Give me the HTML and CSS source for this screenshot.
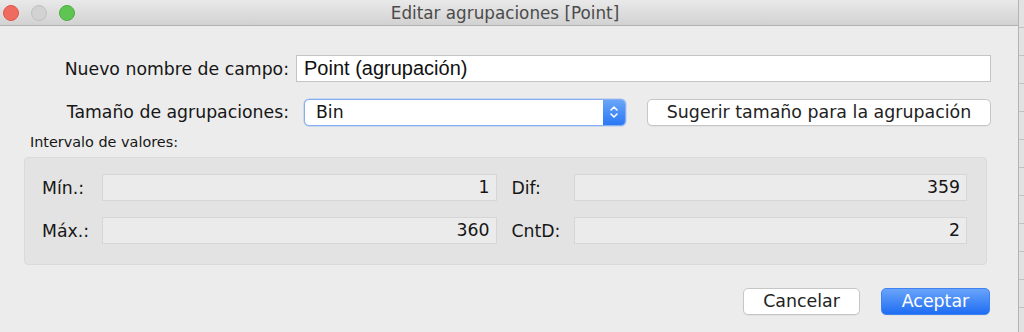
FILE: index.html
```html
<!DOCTYPE html>
<html>
<head>
	<meta http-equiv="Content-Type" content="text/html; charset=utf-8" />
	<title>Editar agrupaciones [Point]</title>
	<link rel="stylesheet" href="styles.css">
</head>
<body>
	<div class="window">
		<div class="titlebar">
			<div class="lights">
				<span class="light red"></span>
				<span class="light gray"></span>
				<span class="light green"></span>
			</div>
			<div class="title">Editar agrupaciones [Point]</div>
			<div></div>
		</div>

		<div class="content">
			<div class="row">
				<label class="lbl">Nuevo nombre de campo:</label>
				<div class="text-input">Point (agrupación)</div>
			</div>
			<div class="row row2">
				<label class="lbl">Tamaño de agrupaciones:</label>
				<div class="select">
					<span class="select-val">Bin</span>
					<span class="select-arrow">
						<svg width="10" height="16" viewBox="0 0 10 16"><path d="M2 6 L5 3 L8 6 M2 10 L5 13 L8 10" fill="none" stroke="#fff" stroke-width="1.5" stroke-linecap="round" stroke-linejoin="round"/></svg>
					</span>
				</div>
				<div class="btn btn-suggest">Sugerir tamaño para la agrupación</div>
			</div>

			<div class="section-title">Intervalo de valores:</div>
			<div class="group">
				<div class="g-row">
					<span class="g-lbl">Mín.:</span>
					<div class="g-field">1</div>
					<span class="g-lbl g-lbl2">Dif:</span>
					<div class="g-field g-field2">359</div>
				</div>
				<div class="g-row">
					<span class="g-lbl">Máx.:</span>
					<div class="g-field">360</div>
					<span class="g-lbl g-lbl2">CntD:</span>
					<div class="g-field g-field2">2</div>
				</div>
			</div>

			<div class="actions">
				<div class="btn btn-cancel">Cancelar</div>
				<div class="btn btn-ok">Aceptar</div>
			</div>
		</div>
	</div>
</body>
</html>
```

FILE: styles.css
```css
*{margin: 0;padding: 0;box-sizing: border-box;}
html,body{ height: 100%; }
body{ background: repeating-linear-gradient(180deg, #e2e2e2 0, #e2e2e2 27px, #c2c2c2 27px, #c2c2c2 28px); font-family: "DejaVu Sans", "Liberation Sans", sans-serif; color: #161616; overflow: hidden; }

.window{ width: 1019px; height: 332px; background: #ececec; border-right: 1px solid #b4b4b4; }

/* barra de titulo */
.titlebar{ display: grid; grid-template-columns: 1fr auto 1fr; align-items: center; height: 26px; background: linear-gradient(#e9e9e9, #d2d2d2); border-bottom: 1px solid #b3b3b3; padding-right: 8px; }
.lights{ display: flex; gap: 12px; padding-left: 3px; }
.light{ width: 16px; height: 16px; border-radius: 50%; }
.light.red{ background: #ef6b5f; border: 1px solid #dc564b; }
.light.gray{ background: #d2d2d2; border: 1px solid #c0c0c0; }
.light.green{ background: #5ec452; border: 1px solid #4eac42; }
.title{ font-size: 16.8px; color: #4b4b4b; }

.content{ padding-top: 29px; }

.row{ display: flex; align-items: center; height: 27px; }
.row2{ margin-top: 16px; height: 28px; }
.lbl{ width: 289px; text-align: right; font-size: 17.3px; color: #161616; }

.text-input{ margin-left: 7px; width: 695px; height: 27px; line-height: 25px; padding: 0 7px; background: #fff; border: 1px solid #c4c4c4; font-family: "Liberation Sans", Arial, sans-serif; font-size: 20px; color: #111; }

.select{ display: flex; margin-left: 15px; width: 322px; height: 27px; background: #fff; border: 1px solid #86aef0; border-radius: 5px; overflow: hidden; box-shadow: 0 0 0 0.5px #a9c6f3; }
.select-val{ flex: 1; padding-left: 11px; line-height: 25px; font-size: 17.3px; color: #161616; }
.select-arrow{ display: flex; align-items: center; justify-content: center; width: 22px; background: linear-gradient(#6aa6f8, #2a78f4); }

.btn{ height: 27px; line-height: 25px; text-align: center; font-size: 17.4px; color: #222; background: #fff; border: 1px solid #c6c6c6; border-radius: 5px; box-shadow: 0 1px 0 rgba(0,0,0,0.04); }
.btn-suggest{ margin-left: 21px; width: 344px; }

.section-title{ margin-top: 7px; padding-left: 30px; height: 24px; line-height: 18px; font-size: 14.4px; color: #161616; }

.group{ margin-left: 24px; width: 963px; padding: 16px 19px 20px 17px; background: #e3e3e3; border: 1px solid #dadada; border-radius: 4px; display: flex; flex-direction: column; gap: 16px; }
.g-row{ display: flex; align-items: center; height: 27px; }
.g-lbl{ width: 60px; font-size: 17.3px; color: #161616; }
.g-lbl2{ margin-left: 15px; width: 63px; }
.g-field{ width: 396px; height: 27px; line-height: 25px; padding-right: 6px; text-align: right; background: #ebebeb; border: 1px solid #d6d6d6; font-size: 17.3px; color: #161616; }
.g-field2{ width: 394px; }

.actions{ display: flex; justify-content: flex-end; gap: 21px; margin-top: 23px; padding-right: 28px; }
.btn-cancel{ width: 117px; }
.btn-ok{ width: 109px; color: #fff; background: linear-gradient(#69a4fa, #1f6df3); border-color: #3e82f3; }
```
